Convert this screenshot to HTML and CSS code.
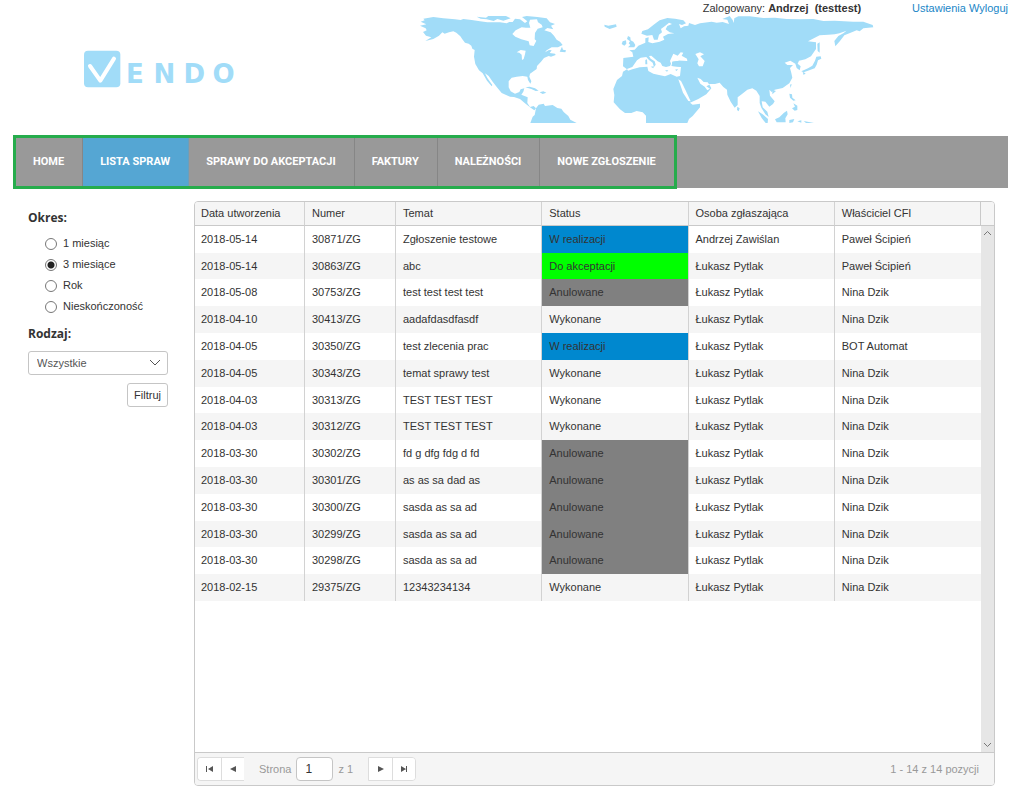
FILE: index.html
```html
<!DOCTYPE html>
<html lang="pl">
<head>
<meta charset="utf-8">
<title>Vendo – Lista spraw</title>
<link rel="stylesheet" href="styles.css">
</head>
<body>
<header class="header">
  <div class="user-bar">
    <span class="user">Zalogowany: <b>Andrzej</b>&nbsp; <b>(testtest)</b></span>
    <span class="user-links"><a href="#">Ustawienia</a> <a href="#">Wyloguj</a></span>
  </div>
  <div class="brand">
    <svg class="logo" viewBox="72 60 459 114" role="img" aria-label="Vendo">
      <rect x="72" y="62" width="109" height="110" rx="12" fill="#a1dcf8"/>
      <path d="M90 108L121 152L162 86" fill="none" stroke="#fff" stroke-width="12" stroke-linecap="round" stroke-linejoin="round"/>
      <text class="wordmark" x="225 313 403 491" y="159">ENDO</text>
    </svg>
    <svg class="map" viewBox="54 45 1371 327" aria-hidden="true">
      <g fill="#a1dcf8">
        <path d="M62 65L74 61L70 56L100 51L130 55L165 58L182 60L190 57L215 60L240 64L262 67L300 67L320 70L328 66L338 66L345 56L360 58L375 69L382 64L366 51L380 48L412 51L440 55L450 67L465 72L453 77L460 88L442 84L433 91L452 97L462 107L470 119L480 125L488 135L474 142L455 142L440 151L435 157L447 150L455 151L449 159L465 161L467 165L453 170L446 168L432 174L423 185L411 198L410 207L390 221L388 230L394 244L391 251L384 240L382 230L368 228L350 230L335 233L326 244L326 262L332 274L345 281L358 276L362 268L373 265L370 275L364 284L383 292L382 309L390 321L401 318L408 325L403 331L390 322L374 309L360 297L342 291L330 290L305 279L292 263L278 245L266 228L255 220L262 234L277 255L275 259L261 242L248 220L237 211L226 192L222 170L224 150L217 146L214 137L206 131L195 128L187 118L181 109L169 98L160 94L147 97L134 101L127 97L117 107L100 117L76 123L94 112L78 107L69 96L80 91L77 85L60 77L79 73Z"/>
        <path d="M230 50L258 53L265 48L318 48L332 55L310 62L292 57L281 63L260 58L242 56Z"/>
        <path d="M479 155L486 140L489 149L498 151L496 157Z"/>
        <path d="M376 262L389 260L405 265L416 272L407 273L394 267ZM419 277L430 274L439 278L428 282Z"/>
        <path d="M408 325L416 314L431 311L435 318L458 315L472 324L484 326L491 336L505 348L511 359L530 369L391 369L398 350L404 345Z"/>
        <path d="M613 74L625 77L648 73L650 80L629 87L614 80Z"/>
        <path d="M684 108L691 112L692 121L700 125L706 135L703 142L684 142L691 135L686 130L690 124L681 117ZM668 124L678 121L679 131L673 137L665 132Z"/>
        <path d="M688 151L704 149L715 137L736 128L736 115L746 112L745 126L757 130L779 125L793 119L789 110L804 102L823 100L809 97L797 88L802 78L816 72L807 68L796 77L783 87L786 97L777 104L773 119L762 119L757 105L741 107L724 101L727 93L744 88L760 75L779 61L802 54L825 56L850 61L858 70L846 75L837 72L842 85L852 79L865 77L867 69L885 75L900 70L935 65L950 68L968 66L987 72L982 59L967 57L989 48L998 60L1001 69L1003 55L1015 49L1049 49L1090 54L1125 53L1160 57L1200 58L1240 57L1270 63L1304 62L1360 65L1390 65L1418 75L1420 82L1390 85L1379 94L1370 91L1350 99L1333 106L1320 123L1306 139L1303 123L1315 108L1330 100L1340 92L1318 100L1304 103L1285 104L1259 106L1224 124L1248 127L1248 147L1233 169L1216 178L1197 182L1193 191L1202 199L1199 211L1190 204L1186 191L1171 182L1154 188L1162 195L1179 195L1170 204L1174 219L1177 233L1168 250L1148 264L1124 269L1115 276L1108 269L1110 287L1124 304L1119 312L1108 320L1096 305L1085 304L1088 322L1102 335L1106 351L1096 343L1084 323L1079 309L1079 288L1069 272L1057 265L1042 269L1026 282L1013 292L1013 315L1004 323L992 305L982 284L981 269L970 261L959 248L945 252L927 252L934 265L919 283L895 297L870 308L878 314L900 311L900 322L878 348L867 357L862 369L738 369L738 347L728 337L710 333L694 339L675 339L660 328L641 307L643 285L640 267L651 240L666 228L669 215L681 208L669 199L670 174L700 170L697 157Z"/>
        <path d="M1252 131L1259 127L1259 158L1253 153ZM1249 170L1262 169L1264 176L1254 181L1250 194L1244 205L1228 211L1211 217L1204 214L1224 205L1237 197L1245 182ZM1208 216L1217 220L1211 225Z"/>
        <path d="M1012 320L1019 325L1016 334L1011 330ZM1170 254L1175 252L1172 264ZM1168 281L1176 283L1177 293L1187 301L1180 302L1170 293ZM1180 310L1192 317L1192 330L1184 332L1176 325L1185 320ZM1117 269L1128 273L1117 283Z"/>
        <path d="M1074 334L1088 343L1104 357L1103 369L1097 369L1085 354ZM1125 358L1138 352L1152 338L1161 332L1163 343L1156 355L1157 367L1130 367ZM1168 360L1183 357L1179 367L1168 369ZM1192 364L1204 361L1204 368ZM1211 363L1242 369L1218 369Z"/>
      </g>
      <g fill="#fff">
        <path d="M390 59L411 58L414 67L425 74L428 82L413 86L405 99L404 118L409 122L401 138L389 136L386 124L364 118L346 110L337 102L347 91L365 82L378 83L391 83L387 69Z"/>
        <path d="M350 157L362 150L377 152L375 163L371 177L366 180L365 164L358 158Z"/>
        <path d="M681 207L697 201L711 181L722 173L739 171L747 180L758 188L762 201L767 194L764 184L752 176L747 168L754 167L773 184L782 188L787 198L798 201L810 198L813 191L810 183L820 161L833 167L842 157L850 158L845 167L861 176L862 183L838 182L817 185L815 198L843 201L840 228L830 230L812 222L795 229L777 225L760 221L745 213L742 200L719 202L697 208L684 212Z"/>
        <path d="M886 162L900 157L912 163L901 169L914 183L908 199L897 199L892 190L896 178Z"/>
        <path d="M835 238L843 243L856 269L872 304L865 303L849 278Z"/>
        <path d="M892 233L902 237L911 246L923 247L928 254L919 259L930 266L922 271L914 260L901 251Z"/>
      </g>
      <path fill="#a1dcf8" d="M736 180L741 178L742 193L736 193ZM752 200L762 199L760 205ZM795 211L805 211L801 215ZM825 209L834 207L830 213ZM817 185L838 182L862 183L862 190L840 200L815 198Z"/>
    </svg>
  </div>
</header>

<nav class="nav">
  <ul class="menu">
    <li><a href="#">HOME</a></li>
    <li><a class="active" href="#">LISTA SPRAW</a></li>
    <li><a href="#">SPRAWY DO AKCEPTACJI</a></li>
    <li><a href="#">FAKTURY</a></li>
    <li><a href="#">NALEŻNOŚCI</a></li>
    <li><a href="#">NOWE ZGŁOSZENIE</a></li>
  </ul>
</nav>

<main class="content">
  <form class="filters">
    <fieldset class="period">
      <legend>Okres:</legend>
      <label><input type="radio" name="okres">1 miesiąc</label>
      <label><input type="radio" name="okres" checked>3 miesiące</label>
      <label><input type="radio" name="okres">Rok</label>
      <label><input type="radio" name="okres">Nieskończoność</label>
    </fieldset>
    <label class="heading" for="rodzaj">Rodzaj:</label>
    <div class="select-box">
      <select id="rodzaj"><option>Wszystkie</option></select>
      <svg class="chevron" viewBox="0 0 12 12" aria-hidden="true"><path d="M1 3L6 8L11 3"/></svg>
    </div>
    <button class="filter-button" type="button">Filtruj</button>
  </form>

  <section class="grid">
    <div class="grid-body">
      <div class="table-area">
        <table>
          <colgroup><col class="col-date"><col class="col-number"><col><col><col><col></colgroup>
          <thead>
            <tr><th>Data utworzenia</th><th>Numer</th><th>Temat</th><th>Status</th><th>Osoba zgłaszająca</th><th>Właściciel CFI</th></tr>
          </thead>
          <tbody>
            <tr><td>2018-05-14</td><td>30871/ZG</td><td>Zgłoszenie testowe</td><td class="running">W realizacji</td><td>Andrzej Zawiślan</td><td>Paweł Ścipień</td></tr>
            <tr><td>2018-05-14</td><td>30863/ZG</td><td>abc</td><td class="pending">Do akceptacji</td><td>Łukasz Pytlak</td><td>Paweł Ścipień</td></tr>
            <tr><td>2018-05-08</td><td>30753/ZG</td><td>test test test test</td><td class="cancelled">Anulowane</td><td>Łukasz Pytlak</td><td>Nina Dzik</td></tr>
            <tr><td>2018-04-10</td><td>30413/ZG</td><td>aadafdasdfasdf</td><td>Wykonane</td><td>Łukasz Pytlak</td><td>Nina Dzik</td></tr>
            <tr><td>2018-04-05</td><td>30350/ZG</td><td>test zlecenia prac</td><td class="running">W realizacji</td><td>Łukasz Pytlak</td><td>BOT Automat</td></tr>
            <tr><td>2018-04-05</td><td>30343/ZG</td><td>temat sprawy test</td><td>Wykonane</td><td>Łukasz Pytlak</td><td>Nina Dzik</td></tr>
            <tr><td>2018-04-03</td><td>30313/ZG</td><td>TEST TEST TEST</td><td>Wykonane</td><td>Łukasz Pytlak</td><td>Nina Dzik</td></tr>
            <tr><td>2018-04-03</td><td>30312/ZG</td><td>TEST TEST TEST</td><td>Wykonane</td><td>Łukasz Pytlak</td><td>Nina Dzik</td></tr>
            <tr><td>2018-03-30</td><td>30302/ZG</td><td>fd g dfg fdg d fd</td><td class="cancelled">Anulowane</td><td>Łukasz Pytlak</td><td>Nina Dzik</td></tr>
            <tr><td>2018-03-30</td><td>30301/ZG</td><td>as as sa dad as</td><td class="cancelled">Anulowane</td><td>Łukasz Pytlak</td><td>Nina Dzik</td></tr>
            <tr><td>2018-03-30</td><td>30300/ZG</td><td>sasda as sa ad</td><td class="cancelled">Anulowane</td><td>Łukasz Pytlak</td><td>Nina Dzik</td></tr>
            <tr><td>2018-03-30</td><td>30299/ZG</td><td>sasda as sa ad</td><td class="cancelled">Anulowane</td><td>Łukasz Pytlak</td><td>Nina Dzik</td></tr>
            <tr><td>2018-03-30</td><td>30298/ZG</td><td>sasda as sa ad</td><td class="cancelled">Anulowane</td><td>Łukasz Pytlak</td><td>Nina Dzik</td></tr>
            <tr><td>2018-02-15</td><td>29375/ZG</td><td>12343234134</td><td>Wykonane</td><td>Łukasz Pytlak</td><td>Nina Dzik</td></tr>
          </tbody>
        </table>
      </div>
      <div class="scroll">
        <div class="scroll-head"></div>
        <div class="scroll-track">
          <svg viewBox="0 0 9 9" aria-hidden="true"><path d="M1 6L4.500 2.500L8 6"/></svg>
          <svg viewBox="0 0 9 9" aria-hidden="true"><path d="M1 3L4.500 6.500L8 3"/></svg>
        </div>
      </div>
    </div>
    <footer class="pager">
      <div class="pager-group first">
        <button type="button" aria-label="Pierwsza strona"><svg viewBox="0 0 8 8"><path d="M0 1H1V7H0ZM7 1V7L2 4Z"/></svg></button>
        <button type="button" aria-label="Poprzednia strona"><svg viewBox="0 0 8 8"><path d="M7 1V7L1 4Z"/></svg></button>
      </div>
      <label class="page-label" for="strona">Strona</label>
      <input class="page-input" id="strona" type="text" value="1">
      <span class="page-total">z 1</span>
      <div class="pager-group last">
        <button type="button" aria-label="Następna strona"><svg viewBox="0 0 8 8"><path d="M1 1V7L7 4Z"/></svg></button>
        <button type="button" aria-label="Ostatnia strona"><svg viewBox="0 0 8 8"><path d="M1 1V7L6 4ZM6 1H7V7H6Z"/></svg></button>
      </div>
      <span class="summary">1 - 14 z 14 pozycji</span>
    </footer>
  </section>
</main>
</body>
</html>
```
FILE: styles.css
```css
* { box-sizing: border-box; }

body {
  display: flex;
  flex-direction: column;
  min-height: 100vh;
  margin: 0;
  padding: 0 15px 11px 13px;
  background: #fff;
  color: #333;
  font: 11px/15px "Liberation Sans", Arial, sans-serif;
}

button, input, select { font: inherit; color: inherit; }
a { text-decoration: none; }

.header { height: 136px; }

.user-bar {
  display: flex;
  justify-content: flex-end;
  gap: 51px;
  height: 15px;
  line-height: 17px;
}

.user-links a { color: #1a86c7; }

.brand {
  display: flex;
  align-items: flex-start;
  padding-left: 71px;
}

.logo {
  width: 153px;
  height: 38px;
  margin-top: 35px;
}

.wordmark {
  fill: #a1dcf8;
  font: bold 78px "DejaVu Sans", sans-serif;
  text-anchor: middle;
}

.map {
  width: 457px;
  height: 109px;
  margin-left: 181px;
}

.nav {
  display: flex;
  height: 52px;
  background: #999;
}

.menu {
  display: flex;
  height: 54px;
  margin: -1px 0;
  padding: 0;
  border: 3px solid #26ac4c;
  list-style: none;
}

.menu a {
  display: block;
  height: 48px;
  padding: 0 18px 0 17px;
  border-right: 1px solid #868686;
  color: #fff;
  font-family: Roboto, sans-serif;
  font-weight: bold;
  line-height: 48px;
  white-space: nowrap;
}

.menu li:last-child a { border-right: 0; }
.menu .active { background: #55a6d3; border-color: #6a9fbd; }

.content {
  display: flex;
  flex: 1;
  padding: 13px 13px 0 15px;
}

.filters {
  display: flex;
  flex-direction: column;
  flex: none;
  width: 140px;
  margin-right: 26px;
}

.period {
  min-width: 0;
  margin: 8px 0;
  padding: 0;
  border: 0;
}

.period legend, .heading {
  padding: 0;
  font: bold 12px/17px "Open Sans", sans-serif;
}

.period legend { margin-bottom: 7px; }

.period label {
  display: flex;
  align-items: center;
  gap: 6px;
  height: 21px;
  padding-left: 17px;
}

.period input {
  flex: none;
  width: 12px;
  height: 12px;
  margin: 0;
  border: 1px solid #777;
  border-radius: 50%;
  background: #fff;
  appearance: none;
}

.period input:checked { background: radial-gradient(circle, #222 0 3px, #fff 4px); }

.select-box {
  display: grid;
  align-items: center;
  margin-top: 9px;
}

.select-box > * { grid-area: 1 / 1; }

.select-box select {
  width: 100%;
  height: 24px;
  padding: 0 8px;
  border: 1px solid #c5c5c5;
  border-radius: 3px;
  background: #fff;
  color: #555;
  appearance: none;
}

.chevron {
  justify-self: end;
  width: 12px;
  height: 12px;
  margin-right: 7px;
  fill: none;
  stroke: #555;
  pointer-events: none;
}

.filter-button {
  align-self: flex-end;
  height: 24px;
  margin-top: 8px;
  padding: 0 6px;
  border: 1px solid #c5c5c5;
  border-radius: 3px;
  background: #fff;
}

.grid {
  display: flex;
  flex: 1;
  flex-direction: column;
  overflow: hidden;
  border: 1px solid #c9c9c9;
  border-radius: 4px;
}

.grid-body { display: flex; flex: 1; }
.table-area { flex: 1; }

table {
  width: 100%;
  border-spacing: 0;
  table-layout: fixed;
}

.col-date { width: 110px; }
.col-number { width: 91px; }

th, td {
  height: 27px;
  padding: 0 7px;
  border-right: 1px solid #d2d2d2;
  text-align: left;
  white-space: nowrap;
}

th:first-child, td:first-child { padding-left: 6px; }

th {
  height: 24px;
  border-bottom: 1px solid #c9c9c9;
  background: #f5f5f5;
  font-weight: normal;
}

tr:nth-child(5n+2) td { height: 26px; }
tbody tr:nth-child(even) { background: #f5f5f5; }
th:last-child { border-right-color: #c9c9c9; }
td:last-child { border-right: 0; }

td.running { background: #0088cf; }
td.pending { background: #0f0; }
td.cancelled { background: #808080; }

.scroll {
  display: flex;
  flex-direction: column;
  width: 13px;
}

.scroll-head {
  height: 24px;
  border-bottom: 1px solid #c9c9c9;
  background: #f5f5f5;
}

.scroll-track {
  display: flex;
  flex: 1;
  flex-direction: column;
  align-items: center;
  justify-content: space-between;
  padding: 3px 0;
  background: #e6e6e6;
}

.scroll-track svg {
  width: 9px;
  height: 9px;
  fill: none;
  stroke: #777;
}

.pager {
  display: flex;
  align-items: center;
  height: 33px;
  padding: 0 15px 0 2px;
  border-top: 1px solid #c9c9c9;
  background: #f5f5f5;
  color: #999;
}

.pager-group {
  display: flex;
  overflow: hidden;
  height: 24px;
  border: 1px solid #ddd;
}

.first { border-right: 0; border-radius: 4px 0 0 4px; }
.last { border-radius: 0 4px 4px 0; }

.pager button {
  display: grid;
  place-items: center;
  width: 23px;
  padding: 0;
  border: 0;
  background: #fff;
}

.pager button + button { border-left: 1px solid #ddd; }

.pager button svg {
  width: 8px;
  height: 8px;
  fill: #555;
}

.page-label { margin-left: 15px; }

.page-input {
  width: 37px;
  height: 24px;
  margin: 0 5px;
  padding: 0 8px;
  border: 1px solid #c5c5c5;
  border-radius: 4px;
  background: #fff;
  color: #333;
  font-size: 12px;
}

.page-total { margin-right: 15px; }
.summary { margin-left: auto; }
```
